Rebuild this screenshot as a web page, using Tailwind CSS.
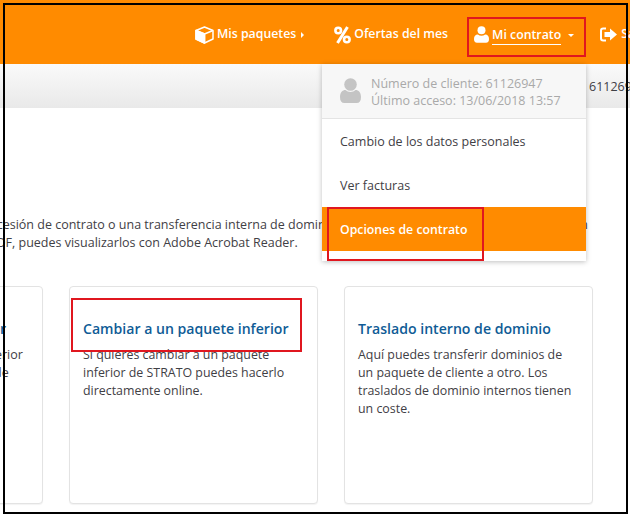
<!doctype html>
<html>
  <head>
    <meta charset="UTF-8">
    <title>Mi contrato - STRATO</title>
    <script src="https://cdn.jsdelivr.net/npm/@tailwindcss/browser@4"></script>
  </head>
  <body class="bg-white">
    <div class="relative w-[630px] h-[515px] overflow-hidden font-['Open_Sans',sans-serif] text-[#3f4045]">

      <!-- orange nav -->
      <header class="h-[64px] bg-[#ff8b00] text-white text-[12.300px] font-semibold flex items-center pl-[195px] pt-[5px] whitespace-nowrap">
        <svg class="w-[19px] h-[18px] shrink-0" viewBox="0 0 19 18" fill="none" stroke="#fff" stroke-width="1.500" stroke-linejoin="round"><path d="M9.500 1 18 4.500v8.500L9.500 17 1 13V4.500z"/><path d="M1 4.500 9.500 8 18 4.500M9.500 8v9"/><path d="M1 4.500 9.500 8v9L1 13z" fill="#fff"/></svg>
        <span class="ml-[3px]">Mis paquetes</span>
        <span class="ml-[5px] mt-[1px] w-0 h-0 border-y-[3px] border-y-transparent border-l-[3px] border-l-white"></span>
        <svg class="ml-[30px] w-[17px] h-[18px] shrink-0" viewBox="0 0 17 18" fill="none" stroke="#fff"><circle cx="4.200" cy="4.500" r="2.800" stroke-width="2.600"/><circle cx="12.800" cy="13.500" r="2.800" stroke-width="2.600"/><path d="M13.500 1 3.500 17" stroke-width="3"/></svg>
        <span class="ml-[3px]">Ofertas del mes</span>
        <svg class="ml-[26px] w-[15px] h-[17px] shrink-0" viewBox="0 0 15 17" fill="#fff"><circle cx="7.500" cy="4.200" r="4"/><path d="M0 13c0-2.800 1.500-4.500 3.800-4.500C5 9.300 6.200 9.700 7.500 9.700s2.500-.4 3.700-1.200C13.500 8.500 15 10.200 15 13c0 2.500-1 3.800-3 3.800H3c-2 0-3-1.300-3-3.800z"/></svg>
        <span class="ml-[3px] border-b border-white leading-[19px] mt-[1px]">Mi contrato</span>
        <span class="ml-[7px] mt-[1px] w-0 h-0 border-x-[3px] border-x-transparent border-t-[3px] border-t-white"></span>
        <svg class="ml-[26px] w-[17px] h-[15px] shrink-0" viewBox="0 0 17 15" fill="#fff"><path d="M6 .5H3.200A3.200 3.200 0 0 0 0 3.700v7.600a3.200 3.200 0 0 0 3.200 3.200H6v-2H3.200A1.200 1.200 0 0 1 2 11.300V3.700a1.200 1.200 0 0 1 1.200-1.200H6z"/><path d="M10 1.500v3.500H4.500v5H10v3.500l7-6z"/></svg>
        <span class="ml-[4px]">Salir</span>
      </header>

      <!-- grey sub bar -->
      <div class="h-[44px] bg-linear-to-b from-[#fafafa] to-[#e9e9e9] text-[12.500px] pl-[589px] pt-[14px] whitespace-nowrap">61126947</div>

      <!-- intro text, cut at the left by the crop -->
      <div class="mt-[108px] text-[12.500px] leading-[18px] whitespace-nowrap">
        <p class="-ml-[319px] w-[907px] flex justify-between">
          <span>Aquí puedes encontrar las opciones para solicitar una cesión de contrato o una transferencia interna de dominios de tus paquetes. Si tienes</span>
          <span>en</span>
        </p>
        <p class="-ml-[279px]">Los formularios están disponibles en formato PDF, puedes visualizarlos con Adobe Acrobat Reader.</p>
      </div>

      <!-- cards -->
      <div class="mt-[34px] -ml-[206px] flex gap-[26px]">
        <div class="w-[249px] h-[218px] shrink-0 bg-white border border-[#e3e3e3] rounded-[4px] shadow-[0_1px_1px_rgba(0,0,0,0.05)] px-[13px] pt-[32px]">
          <h3 class="-ml-[14px] text-[14.100px] leading-[20px] font-semibold text-[#0f5c96] whitespace-nowrap">Cambiar a un paquete superior</h3>
          <p class="mt-[7px] pl-[114px] text-[12.500px] leading-[18px] whitespace-nowrap">paquete superior</p>
          <p class="pl-[186px] text-[12.500px] leading-[18px] whitespace-nowrap">de</p>
        </div>
        <div class="w-[249px] h-[218px] shrink-0 bg-white border border-[#e3e3e3] rounded-[4px] shadow-[0_1px_1px_rgba(0,0,0,0.05)] px-[13px] pt-[32px]">
          <h3 class="text-[14.100px] leading-[20px] font-semibold text-[#0f5c96] whitespace-nowrap">Cambiar a un paquete inferior</h3>
          <p class="mt-[7px] text-[12.400px] leading-[18px]">Si quieres cambiar a un paquete inferior de STRATO puedes hacerlo directamente online.</p>
        </div>
        <div class="w-[249px] h-[218px] shrink-0 bg-white border border-[#e3e3e3] rounded-[4px] shadow-[0_1px_1px_rgba(0,0,0,0.05)] px-[13px] pt-[32px]">
          <h3 class="text-[14.100px] leading-[20px] font-semibold text-[#0f5c96] whitespace-nowrap">Traslado interno de dominio</h3>
          <p class="mt-[7px] text-[12.400px] leading-[18px]">Aquí puedes transferir dominios de un paquete de cliente a otro. Los traslados de dominio internos tienen un coste.</p>
        </div>
      </div>

      <!-- dropdown menu -->
      <div class="absolute left-[322px] top-[64px] w-[264px] h-[197px] bg-white shadow-[0_1px_5px_rgba(0,0,0,0.25)] text-[12.500px]">
        <div class="h-[55px] bg-[#f7f7f7] border-b border-[#e4e4e4] flex items-center pl-[18px] pt-[1px] text-[#a9a9a9] leading-[17px]">
          <svg class="w-[21px] h-[26px] shrink-0 mb-[1px]" viewBox="0 0 21 26" fill="#c4c4c4"><circle cx="10.500" cy="6.500" r="6.300"/><path d="M0 19c0-4.500 2.500-7 5.500-7 1.300 1.300 3 2 5 2s3.700-.7 5-2c3 0 5.500 2.500 5.500 7 0 4-1.500 6-4.500 6h-12C1.500 25 0 23 0 19z"/></svg>
          <div class="ml-[10px] whitespace-nowrap">
            <div>Número de cliente: 61126947</div>
            <div>Último acceso: 13/06/2018 13:57</div>
          </div>
        </div>
        <a class="h-[44px] flex items-center pl-[18px] pt-[3px]">Cambio de los datos personales</a>
        <a class="h-[44px] flex items-center pl-[18px] pt-[3px]">Ver facturas</a>
        <a class="h-[44px] flex items-center pl-[18px] pt-[3px] bg-[#ff8b00] text-white font-semibold text-[12.300px]">Opciones de contrato</a>
      </div>

      <!-- red annotation boxes -->
      <div class="absolute left-[467px] top-[17px] w-[119px] h-[40px] border-2 border-[#e0171f]"></div>
      <div class="absolute left-[327px] top-[207px] w-[157px] h-[54px] border-2 border-[#e0171f]"></div>
      <div class="absolute left-[71px] top-[298px] w-[231px] h-[54px] border-2 border-[#e0171f]"></div>

      <!-- black frame of the screenshot -->
      <div class="absolute left-[3px] top-[3px] w-[625px] h-[511px] border-2 border-black"></div>
    </div>
  </body>
</html>
